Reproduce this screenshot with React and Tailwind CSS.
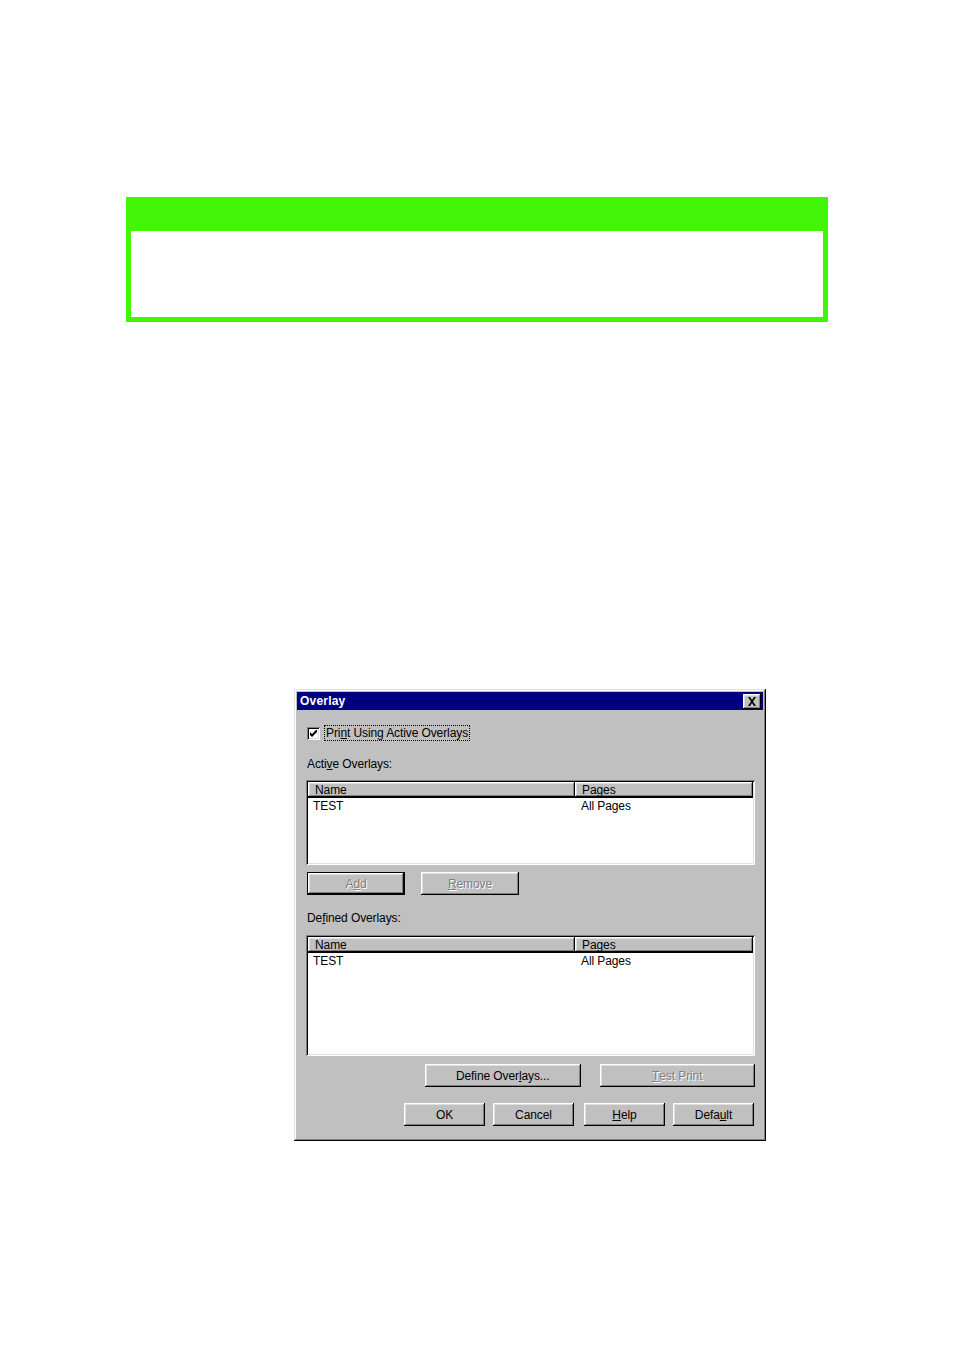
import React from "react";

const raised =
  "shadow-[inset_-1px_-1px_0_#000,inset_1px_1px_0_#fff,inset_-2px_-2px_0_#808080,inset_2px_2px_0_#dfdfdf]";
const sunken =
  "shadow-[inset_1px_1px_0_#808080,inset_-1px_-1px_0_#fff,inset_2px_2px_0_#000,inset_-2px_-2px_0_#dfdfdf]";
const disabled = "text-[#808080] [text-shadow:1px_1px_0_#fff]";

function Btn({ children, w, className = "", def = false, dis = false }) {
  return (
    <div
      className={`h-[23px] flex items-center justify-center bg-[#c0c0c0] ${
        def ? "border border-black" : ""
      } ${className}`}
      style={{ width: w }}
    >
      <div className={`w-full h-full flex items-center justify-center ${raised} ${dis ? disabled : "text-black"}`}>
        {children}
      </div>
    </div>
  );
}

function ListBox({ h }) {
  return (
    <div className={`bg-white ${sunken} p-[2px] w-[449px]`} style={{ height: h }}>
      <div className="flex h-[16px] border-b border-black">
        <div className={`w-[267px] h-full bg-[#c0c0c0] ${raised} pl-[7px] pt-[1px] flex items-center`}>Name</div>
        <div className={`flex-1 h-full bg-[#c0c0c0] ${raised} pl-[7px] pt-[1px] flex items-center`}>Pages</div>
      </div>
      <div className="flex h-[15px] items-center">
        <div className="w-[267px] pl-[5px]">TEST</div>
        <div className="pl-[6px]">All Pages</div>
      </div>
    </div>
  );
}

export default function App() {
  return (
    <div className="min-h-[1351px] w-[954px] bg-white" style={{ fontFamily: '"Liberation Sans", Arial, sans-serif' }}>
      <div className="h-[197px]" />
      <div className="ml-[126px] w-[702px] h-[125px] bg-[#42f406] flex flex-col">
        <div className="h-[34px]" />
        <div className="mx-[5px] mb-[5px] flex-1 bg-white" />
      </div>
      <div className="h-[367px]" />
      <div
        className="ml-[294px] w-[472px] h-[452px] bg-[#c0c0c0] p-[3px] text-[12px] leading-none text-black tracking-[-0.1px] shadow-[inset_-1px_-1px_0_#000,inset_1px_1px_0_#dfdfdf,inset_-2px_-2px_0_#808080,inset_2px_2px_0_#fff]"
      >
        <div className="h-[18px] bg-[#000080] flex items-center justify-between pl-[3px] pr-[2px]">
          <span className="text-white font-bold text-[12px] tracking-[0.2px]">Overlay</span>
          <div className={`w-[18px] h-[15px] bg-[#c0c0c0] ${raised} flex items-center justify-center`}>
            <svg width="10" height="9" viewBox="0 0 10 9">
              <path d="M1 0h2l2 3 2-3h2L6 4.5 9 9H7L5 6 3 9H1l3-4.5z" fill="#000" />
            </svg>
          </div>
        </div>
        <div className="pl-[9px] pr-[8px] flex flex-col">
          <div className="mt-[15px] h-[16px] flex items-center">
            <div className={`ml-[1px] w-[13px] h-[13px] bg-white ${sunken} flex items-center justify-center`}>
              <svg width="7" height="7" viewBox="0 0 7 7">
                <path d="M0 2v3l2 2 5-5V-1L2 4z" fill="#000" />
              </svg>
            </div>
            <div className="ml-[4px] h-[16px] px-[1px] flex items-center border border-dotted border-black">
              Pri<span className="underline">n</span>t Using Active Overlays
            </div>
          </div>
          <div className="mt-[16px] h-[14px] flex items-center pl-[1px]">
            Acti<span className="underline">v</span>e Overlays:
          </div>
          <div className="mt-[9px]">
            <ListBox h={85} />
          </div>
          <div className="mt-[7px] flex">
            <Btn w={98} className="ml-[1px]" def dis>
              A<span className="underline">d</span>d
            </Btn>
            <Btn w={98} className="ml-[16px]" dis>
              <span className="underline">R</span>emove
            </Btn>
          </div>
          <div className="mt-[16px] h-[14px] flex items-center pl-[1px]">
            De<span className="underline">f</span>ined Overlays:
          </div>
          <div className="mt-[10px]">
            <ListBox h={121} />
          </div>
          <div className="mt-[8px] flex">
            <Btn w={156} className="ml-[119px]">
              Define Over<span className="underline">l</span>ays...
            </Btn>
            <Btn w={156} className="ml-[19px]" dis>
              <span className="underline">T</span>est Print
            </Btn>
          </div>
          <div className="mt-[16px] flex">
            <Btn w={81} className="ml-[98px]">OK</Btn>
            <Btn w={81} className="ml-[8px]">Cancel</Btn>
            <Btn w={81} className="ml-[10px]">
              <span className="underline">H</span>elp
            </Btn>
            <Btn w={81} className="ml-[8px]">
              Defa<span className="underline">u</span>lt
            </Btn>
          </div>
        </div>
      </div>
    </div>
  );
}
